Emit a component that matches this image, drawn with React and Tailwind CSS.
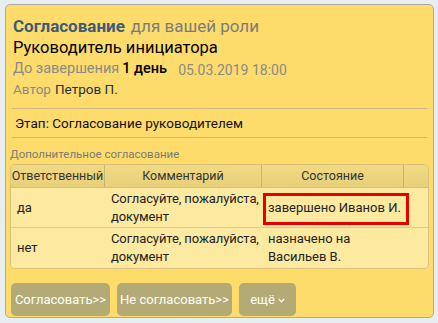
import React from 'react';

const rows = [
  { who: 'да', comment: ['Согласуйте, пожалуйста,', 'документ'], state: ['завершено Иванов И.'] },
  { who: 'нет', comment: ['Согласуйте, пожалуйста,', 'документ'], state: ['назначено на', 'Васильев В.'] },
];

const App = () => {
  return (
    <div
      className="w-[438px] h-[323px] bg-[#e8eef0] pt-[4px] pl-[5px] overflow-hidden"
      style={{ fontFamily: 'Roboto, "Noto Sans", sans-serif' }}
    >
      <div className="w-[429px] h-[314px] bg-[#fddc6c] border border-[#aaaaaa] rounded-[5px] px-[4px] flex flex-col">
        {/* Title block */}
        <div className="px-[3px] pt-[10px] leading-none">
          <div className="h-[22px] flex items-center text-[17px]">
            <span className="font-bold text-[#3d5b79]">Согласование</span>
            <span className="ml-[6px] text-[#7b7b7b]">для вашей роли</span>
          </div>
          <div className="h-[22px] flex items-center text-[16.5px] text-black">Руководитель инициатора</div>
          <div className="h-[21px] flex items-center text-[14.5px]">
            <span className="text-[#8a8a8a]">До завершения</span>
            <span className="ml-[3px] font-medium text-black">1 день</span>
            <span className="ml-[11px] text-[#8a8a8a] text-[14px]">05.03.2019 18:00</span>
          </div>
          <div className="h-[19px] flex items-center text-[13.5px]">
            <span className="text-[#8a8a8a]">Автор</span>
            <span className="ml-[4px] text-[#1f2f40]">Петров П.</span>
          </div>
        </div>

        {/* Stage */}
        <div className="mx-[2px] mt-[9px] h-[30px] border-y border-[#cdb985] flex items-center px-[3px] text-[13.5px] text-[#111]">
          Этап: Согласование руководителем
        </div>

        <div className="mt-[9px] text-[11.5px] text-[#7a7a7a] leading-[14px]">Дополнительное согласование</div>

        {/* Table */}
        <div className="relative mt-[3px] border border-[#d9c27e] rounded-[5px] overflow-hidden text-[13px] text-[#222]">
          <div className="flex h-[23px] bg-gradient-to-b from-[#f2da84] to-[#e8d07a] border-b border-[#d6c07c] text-[#333] text-[12.5px]">
            <div className="w-[94px] flex items-center justify-center border-r border-[#c9b372] whitespace-nowrap">Ответственный</div>
            <div className="w-[157px] flex items-center justify-center border-r border-[#c9b372]">Комментарий</div>
            <div className="w-[142px] flex items-center justify-center border-r border-[#c9b372]">Состояние</div>
            <div className="flex-1" />
          </div>
          {rows.map((r, i) => (
            <div
              key={i}
              className={`flex h-[40px] bg-[#fde9a0] leading-[18px] ${i === 0 ? 'border-b border-[#dcc98c]' : ''}`}
            >
              <div className="w-[94px] flex items-center pl-[6px]">{r.who}</div>
              <div className="w-[157px] flex flex-col justify-center pl-[6px] whitespace-nowrap tracking-[-0.1px]">
                {r.comment.map((l) => <span key={l}>{l}</span>)}
              </div>
              <div className="flex-1 flex flex-col justify-center pl-[6px] whitespace-nowrap">
                {r.state.map((l) => <span key={l}>{l}</span>)}
              </div>
            </div>
          ))}
          {/* highlight frame */}
          <div className="absolute left-[252px] top-[28px] w-[146px] h-[32px] border-[3px] border-[#e60000] pointer-events-none" />
        </div>

        {/* Buttons */}
        <div className="mt-[14px] flex gap-[7px] pl-[1px] text-[13px] text-white">
          <button className="w-[99px] h-[33px] bg-[#b3aa76] rounded-[5px]">Согласовать&gt;&gt;</button>
          <button className="w-[115px] h-[33px] bg-[#b3aa76] rounded-[5px]">Не согласовать&gt;&gt;</button>
          <button className="w-[57px] h-[33px] bg-[#b3aa76] rounded-[5px] flex items-center justify-center gap-[3px]">
            ещё
            <svg width="7" height="5" viewBox="0 0 7 5" className="mt-[2px]">
              <path d="M0.8 0.8 L3.5 3.8 L6.2 0.8" fill="none" stroke="white" strokeWidth="1.2" />
            </svg>
          </button>
        </div>
      </div>
    </div>
  );
};

export default App;
